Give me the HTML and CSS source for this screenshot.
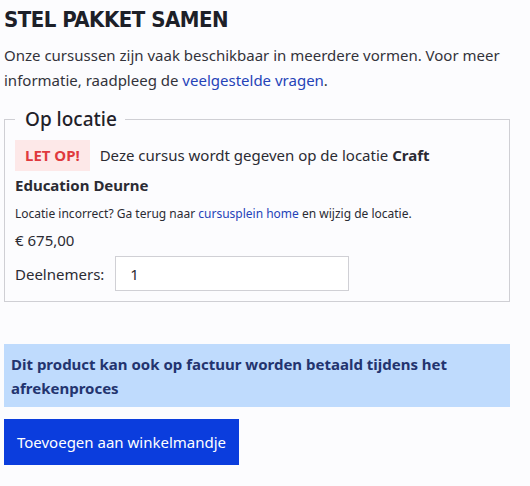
FILE: index.html
```html
<!DOCTYPE html>
<html lang="nl">
<head>
<meta charset="utf-8">
<link rel="stylesheet" href="styles.css">
</head>
<body>
<div class="wrap">
  <h2 class="title">STEL PAKKET SAMEN</h2>
  <p class="intro">Onze cursussen zijn vaak beschikbaar in meerdere vormen. Voor meer informatie, raadpleeg de <a href="#">veelgestelde vragen</a>.</p>
  <fieldset class="box">
    <legend>Op locatie</legend>
    <p class="loc"><span class="badge">LET OP!</span> Deze cursus wordt gegeven op de locatie <b>Craft Education Deurne</b></p>
    <p class="small">Locatie incorrect? Ga terug naar <a href="#">cursusplein home</a> en wijzig de locatie.</p>
    <p class="price">€ 675,00</p>
    <div class="qty">
      <label>Deelnemers:</label>
      <input type="text" value="1">
    </div>
  </fieldset>
  <div class="info">Dit product kan ook op factuur worden betaald tijdens het afrekenproces</div>
  <button class="btn">Toevoegen aan winkelmandje</button>
</div>
</body>
</html>
```
FILE: styles.css
```css
html, body { margin: 0; padding: 0; background: #fcfcfe; }
body { font-family: "Noto Sans", sans-serif; color: #2b2b33; }
.wrap { width: 506px; padding: 0 0 0 4px; }
.title {
  font-family: "DejaVu Sans Condensed", "DejaVu Sans", sans-serif;
  font-weight: bold; font-size: 22px; letter-spacing: -0.5px;
  color: #1d2028; margin: 7px 0 0; line-height: 26px;
}
.intro { font-size: 15px; line-height: 25px; margin: 10px 0 0; color: #33333b; }
a { color: #2543b8; text-decoration: none; }
.box {
  border: 1px solid #cfcfd4; margin: 13px 0 0; padding: 8px 10px 10px;
  min-width: 0;
}
.box legend { font-size: 19px; font-weight: 500; padding: 0 8px 0 10px; color: #1f2129; }
.loc { font-size: 15px; line-height: 28px; margin: 0; }
.loc b { font-weight: 700; }
.badge {
  display: inline-block; background: #fde8e8; color: #e0393e; font-weight: 700;
  padding: 2px 10px; margin-right: 6px; line-height: 27px;
}
.small { font-size: 12px; margin: 6px 0 0; line-height: 18px; }
.price { font-size: 15px; margin: 7px 0 0; line-height: 20px; }
.qty { display: flex; align-items: center; gap: 11px; margin-top: 6px; }
.qty label { font-size: 15px; }
.qty input {
  width: 234px; height: 35px; box-sizing: border-box; border: 1px solid #d0d0d5;
  background: #fff; font-family: "Noto Sans", sans-serif; font-size: 15px;
  padding: 0 14px; color: #2b2b33; margin: 0;
}
.info {
  margin-top: 42px; background: #bfdbfd; color: #23346f; font-weight: 700;
  font-size: 15px; line-height: 24px; padding: 8px 7px 7px 7px;
}
.btn {
  margin-top: 12px; background: #0b3ddd; color: #fff; border: 0;
  font-family: "Noto Sans", sans-serif; font-size: 15px; padding: 0;
  height: 46px; width: 235px; display: block; white-space: nowrap;
}
```
